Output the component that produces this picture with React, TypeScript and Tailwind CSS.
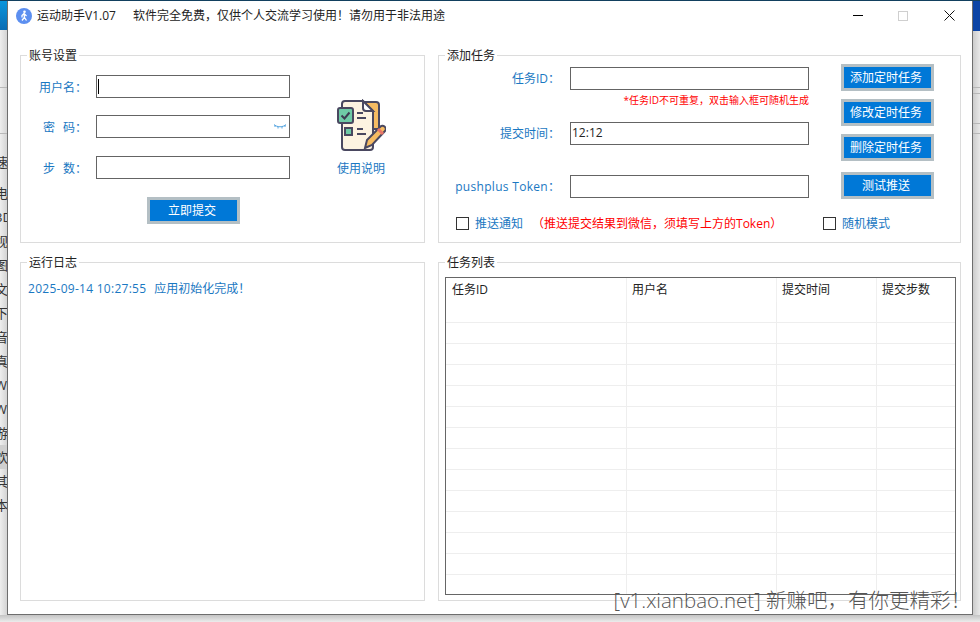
import React from "react";

const font = { fontFamily: '"Open Sans", "Noto Sans CJK SC", sans-serif' };

const sideGlyphs = ["电", "3D", "视", "图", "文", "下", "音", "真", "W", "W", "游", "欢", "其", "本"];
const rowLines = Array.from({ length: 14 });

const Field = ({ label, w = "w-[66px]", mr = "mr-[9px]", inputW, value, labelClass = "", children }: any) => (
	<div className="flex items-center">
		<label className={`${w} ${mr} ${labelClass} text-right text-[#1a78c2] whitespace-nowrap`}>{label}</label>
		<div className={`relative ${inputW} h-[23px] border border-[#646464] bg-white flex items-center px-[1px] pb-[2px] text-[12px] text-[#222]`}>
			{value}
			{children}
		</div>
	</div>
);

const BlueBtn = ({ children, className = "" }: any) => (
	<button className={`w-[93px] h-[27px] border-[3px] border-[#b4bfc4] bg-[#0078d7] text-white text-[12px] flex items-center justify-center pr-[3px] ${className}`}>
		{children}
	</button>
);

const Check = ({ label, className = "" }: any) => (
	<div className={`flex items-center ${className}`}>
		<span className="w-[13px] h-[13px] border border-[#333] bg-white" />
		<span className="ml-[6px] pt-[2px] text-[#1a78c2]">{label}</span>
	</div>
);

const Group = ({ title, className = "", children }: any) => (
	<div className={`relative border border-[#dcdcdc] ${className}`}>
		<span className="absolute -top-[8px] left-[6px] bg-white px-[2px] leading-[16px] text-[#222]">{title}</span>
		{children}
	</div>
);

const GuideIcon = () => (
	<svg width="50" height="52" viewBox="0 0 50 52" fill="none">
		<path d="M26 3h14a3 3 0 0 1 3 3v24H30z" fill="#f6bb62" stroke="#4a4860" strokeWidth="2" />
		<path d="M6 5a3 3 0 0 1 3-3h18l10 10v36a3 3 0 0 1-3 3H9a3 3 0 0 1-3-3z" fill="#fdf3e1" stroke="#4a4860" strokeWidth="2" />
		<path d="M27 2v7a3 3 0 0 0 3 3h7z" fill="#fff" stroke="#4a4860" strokeWidth="2" />
		<rect x="2" y="9" width="15" height="15" rx="2" fill="#6fcaa6" stroke="#4a4860" strokeWidth="2" />
		<path d="M5.5 16.5l3 3 5-6" stroke="#3c3a50" strokeWidth="2" />
		<rect x="9" y="29" width="7" height="7" fill="#6fcaa6" stroke="#4a4860" strokeWidth="2" />
		<path d="M21 14h6M21 19h9M21 30h6M21 35h9" stroke="#4a4860" strokeWidth="2" />
		<path d="M29 49l2-8 13-13a3 3 0 0 1 5 4L36 46z" fill="#f6bb62" stroke="#4a4860" strokeWidth="2" />
		<path d="M42 30l5 5" stroke="#e8756a" strokeWidth="3" />
	</svg>
);

const App = () => {
	return (
		<div className="relative w-[980px] h-[622px] overflow-hidden bg-[#e6e6e6] flex flex-col text-[12px]" style={font}>
			<div className="h-[1px] bg-[#12405f] shrink-0" />
			<div className="flex h-[614px] shrink-0">
				{/* left sliver of the window behind */}
				<div className="w-[7px] shrink-0 flex flex-col overflow-hidden bg-gradient-to-r from-[#eeeeee] to-[#d4d4d4]">
					<div className="h-[29px] shrink-0 bg-gradient-to-b from-[#0a96dc] to-[#0a6cb4]" />
					<div className="h-[58px] shrink-0 border-b border-[#b8b8b8]" />
					<div className="h-[46px] shrink-0 border-b border-[#b8b8b8]" />
					<div className="h-[16px] shrink-0" />
					<div className="h-[24px] mb-[7px] shrink-0 leading-[24px] -ml-[5px] w-[30px] whitespace-nowrap text-[#333] text-[13px]">速</div>
					{sideGlyphs.map((g, i) => (
						<div
							key={i}
							className={`h-[24px] shrink-0 leading-[24px] -ml-[5px] w-[30px] whitespace-nowrap text-[#333] text-[13px] ${g === "欢" ? "bg-[#cfcfcf]" : ""}`}
						>
							{g}
						</div>
					))}
				</div>

				<div className="w-[966px] shrink-0 bg-white border-l border-r border-b border-[#6e6e6e] flex flex-col">
					{/* title bar */}
					<div className="h-[29px] shrink-0 flex items-center pl-[8px] text-[#222]">
						<svg width="16" height="16" viewBox="0 0 16 16">
							<circle cx="8" cy="8" r="8" fill="#5c8ff0" />
							<circle cx="8.5" cy="3.8" r="1.3" fill="#fff" />
							<path d="M8 5.5L6 7.5 6 9.5M8 5.5l2.5 2.5M8 6l.5 3.5 2 3M8.3 9.5l-2.3 3" stroke="#fff" strokeWidth="1.3" fill="none" />
						</svg>
						<span className="ml-[5px] w-[96px] shrink-0">运动助手V1.07</span>
						<span>软件完全免费，仅供个人交流学习使用！请勿用于非法用途</span>
						<div className="ml-auto flex h-full">
							<div className="w-[45px] flex items-center justify-center">
								<span className="w-[10px] h-[1px] bg-black" />
							</div>
							<div className="w-[46px] flex items-center justify-center">
								<span className="w-[10px] h-[10px] border border-[#cfcfcf]" />
							</div>
							<div className="w-[46px] flex items-center justify-center">
								<svg width="11" height="11" viewBox="0 0 11 11">
									<path d="M0.5 0.5l10 10M10.5 0.5l-10 10" stroke="#111" strokeWidth="1" />
								</svg>
							</div>
						</div>
					</div>

					<div className="grid grid-cols-[405px_523px] grid-rows-[188px_339px] gap-x-[13px] gap-y-[19px] pl-[12px] pt-[25px]">
						<Group title="账号设置" className="flex">
							<div className="w-[269px] shrink-0 pt-[19px] flex flex-col">
								<Field label="用户名：" labelClass="pt-[2px]" inputW="w-[194px]">
									<span className="absolute left-[1px] top-[3px] w-[1px] h-[15px] bg-black" />
								</Field>
								<div className="mt-[17px]">
									<Field
										labelClass="pt-[2px]"
										label={
											<>
												密<span className="inline-block w-[8px]" />码：
											</>
										}
										inputW="w-[194px]"
									>
										<svg className="absolute right-[2px] top-[7px]" width="14" height="7" viewBox="0 0 14 7" fill="none">
											<path d="M1 1.5c3 3 9 3 12 0M2 2v2M5 3.5v2M9 3.5v2M12 2v2" stroke="#2f8fd8" strokeWidth="0.8" />
										</svg>
									</Field>
								</div>
								<div className="mt-[18px]">
									<Field
										labelClass="pt-[2px]"
										label={
											<>
												步<span className="inline-block w-[8px]" />数：
											</>
										}
										inputW="w-[194px]"
									/>
								</div>
								<BlueBtn className="ml-[126px] mt-[18px]">立即提交</BlueBtn>
							</div>
							<div className="ml-[23px] w-[96px] pt-[43px] flex flex-col items-center">
								<GuideIcon />
								<span className="mt-[9px] text-[#1a78c2]">使用说明</span>
							</div>
						</Group>

						<Group title="添加任务">
							<div className="flex">
								<div className="w-[370px] shrink-0 pt-[11px] flex flex-col">
									<Field label="任务ID：" w="w-[121px]" mr="mr-[10px]" inputW="w-[239px]" />
									<div className="h-[32px] pt-[2px] text-right text-[10px] leading-[16px] text-[#f00]">*任务ID不可重复，双击输入框可随机生成</div>
									<Field label="提交时间：" w="w-[121px]" mr="mr-[10px]" inputW="w-[239px]" value="12:12" />
									<div className="mt-[30px]">
										<Field
											label={
												<>
													<span className="tracking-[0.3px]">pushplus Token</span>：
												</>
											}
											w="w-[121px]"
											mr="mr-[10px]"
											inputW="w-[239px]"
										/>
									</div>
								</div>
								<div className="ml-[32px] pt-[8px] flex flex-col gap-[8px]">
									<BlueBtn>添加定时任务</BlueBtn>
									<BlueBtn>修改定时任务</BlueBtn>
									<BlueBtn>删除定时任务</BlueBtn>
									<BlueBtn className="mt-[3px]">测试推送</BlueBtn>
								</div>
							</div>
							<div className="flex items-center pl-[17px] mt-[14px]">
								<Check label="推送通知" />
								<span className="ml-[9px] w-[291px] pt-[2px] text-[#f00] whitespace-nowrap">（推送提交结果到微信，须填写上方的Token）</span>
								<Check label="随机模式" className="ml-[0px]" />
							</div>
						</Group>

						<Group title="运行日志" className="pt-[17px] pl-[7px] text-[#1a78c2]">
							<div>
								<span className="tracking-[0.27px] mr-[8px]">2025-09-14 10:27:55</span>应用初始化完成！
							</div>
						</Group>

						<Group title="任务列表" className="pt-[14px] px-[6px]">
							<div className="w-[511px] h-[318px] border border-[#666] overflow-hidden text-[#222]">
								<div className="flex h-[24px] items-start">
									<span className="w-[181px] pl-[6px] border-r border-[#f0f0f0] h-full leading-[24px]">任务ID</span>
									<span className="w-[150px] pl-[5px] border-r border-[#f0f0f0] h-full leading-[24px]">用户名</span>
									<span className="w-[100px] pl-[5px] border-r border-[#f0f0f0] h-full leading-[24px]">提交时间</span>
									<span className="flex-1 pl-[5px] h-full leading-[24px]">提交步数</span>
								</div>
								{rowLines.map((_, i) => (
									<div key={i} className="flex h-[21px] border-b border-[#eeeeee]">
										<span className="w-[181px] border-r border-[#eeeeee]" />
										<span className="w-[150px] border-r border-[#eeeeee]" />
										<span className="w-[100px] border-r border-[#eeeeee]" />
										<span className="flex-1" />
									</div>
								))}
							</div>
						</Group>
					</div>
				</div>

				{/* right sliver */}
				<div className="flex-1 flex flex-col bg-gradient-to-r from-[#cccccc] to-[#e8e8e8]">
					<div className="h-[30px] shrink-0 bg-[#0b44a6]" />
					<div className="h-[57px] shrink-0 border-b border-[#b8b8b8]" />
					<div className="h-[6px] shrink-0 border-b border-[#b8b8b8]" />
					<div className="h-[30px] shrink-0 border-b border-[#b8b8b8]" />
					<div className="h-[10px] shrink-0 border-b border-[#b8b8b8]" />
				</div>
			</div>
			<div className="flex-1 bg-gradient-to-b from-[#c4c4c4] to-[#ececec]" />

			<span className="absolute right-[9px] bottom-[9px] text-[20.5px] leading-[26px] font-light text-[#555] whitespace-nowrap">
				[v1.xianbao.net] 新赚吧，有你更精彩！
			</span>
		</div>
	);
};

export default App;
